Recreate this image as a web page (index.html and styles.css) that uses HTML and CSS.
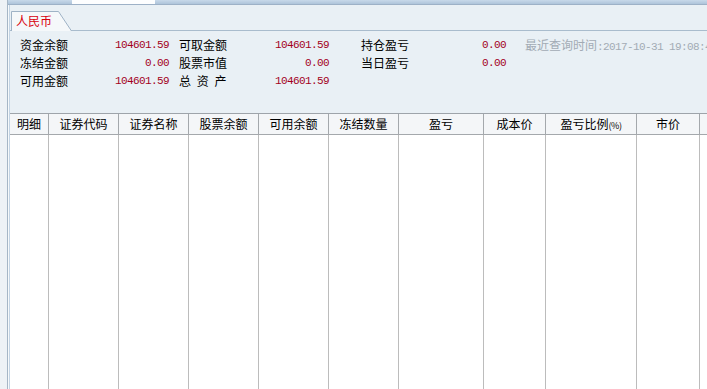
FILE: index.html
```html
<!DOCTYPE html>
<html lang="zh-CN">
<head>
    <meta charset="UTF-8">
    <title>资金股份</title>
    <link rel="stylesheet" href="styles.css">
</head>
<body>
    <div class="frame">
        <div class="panel">
            <div class="topbar">
                <div class="topbar-box"></div>
            </div>
            <div class="tabs">
                <div class="tab">
                    <svg class="tab-shape" width="61" height="20" viewBox="0 0 61 20">
                        <path d="M0.5 20 V0.5 H47.5 L60.5 20" fill="#f5f8fa" stroke="#9fb3c6" stroke-width="1"/>
                    </svg>
                    <span class="tab-label">人民币</span>
                </div>
            </div>
            <div class="info">
                <div class="pair w1"><span>资金余额</span><span class="num">104601.59</span></div>
                <div class="pair w2"><span>可取金额</span><span class="num">104601.59</span></div>
                <div class="pair w3"><span>持仓盈亏</span><span class="num">0.00</span></div>
                <div class="stamp">最近查询时间<span class="mono">:2017-10-31 19:08:44</span></div>

                <div class="pair w1"><span>冻结金额</span><span class="num">0.00</span></div>
                <div class="pair w2"><span>股票市值</span><span class="num">0.00</span></div>
                <div class="pair w3"><span>当日盈亏</span><span class="num">0.00</span></div>
                <div></div>

                <div class="pair w1"><span>可用金额</span><span class="num">104601.59</span></div>
                <div class="pair w2"><span class="spaced">总 资 产</span><span class="num">104601.59</span></div>
                <div></div>
                <div></div>
            </div>
            <div class="grid">
                <div class="th">明细</div>
                <div class="th">证券代码</div>
                <div class="th">证券名称</div>
                <div class="th">股票余额</div>
                <div class="th">可用余额</div>
                <div class="th">冻结数量</div>
                <div class="th">盈亏</div>
                <div class="th">成本价</div>
                <div class="th">盈亏比例<span class="pct">(%)</span></div>
                <div class="th">市价</div>
                <div class="th last"></div>

                <div class="td"></div>
                <div class="td"></div>
                <div class="td"></div>
                <div class="td"></div>
                <div class="td"></div>
                <div class="td"></div>
                <div class="td"></div>
                <div class="td"></div>
                <div class="td"></div>
                <div class="td"></div>
                <div class="td last"></div>
            </div>
        </div>
    </div>
</body>
</html>
```

FILE: styles.css
```css
html, body {
    margin: 0;
    padding: 0;
    height: 100%;
    overflow: hidden;
}
body {
    font-family: "Noto Sans CJK SC", "Liberation Sans", sans-serif;
    font-size: 12px;
    color: #000;
    background-color: #eef2f6;
}
.frame {
    height: 100%;
    padding-left: 7px;
    box-sizing: border-box;
}
.panel {
    height: 100%;
    display: flex;
    flex-direction: column;
    border-left: 1px solid #a6b6c6;
    box-shadow: inset 1px 0 0 #f6f9fb, inset 2px 0 0 #c4d4e4;
    padding-left: 2px;
    background-color: #e9f0f5;
    overflow: hidden;
}
.topbar {
    height: 4px;
    flex: none;
    background: linear-gradient(#c8d9ea, #aec4da);
    border-bottom: 1px solid #9db1c7;
    margin-left: -2px;
    padding-left: 64px;
}
.topbar-box {
    width: 83px;
    height: 4px;
    background-color: #fdfeff;
}
.tabs {
    height: 25px;
    flex: none;
    display: flex;
    align-items: flex-end;
    border-bottom: 1px solid #a9bccd;
    padding-left: 1px;
}
.tab {
    position: relative;
    width: 61px;
    height: 20px;
    margin-bottom: -1px;
}
.tab-shape {
    position: absolute;
    left: 0;
    top: 0;
}
.tab-label {
    position: relative;
    display: block;
    padding-left: 5px;
    line-height: 19px;
    color: #d8000c;
}
.info {
    height: 82px;
    flex: none;
    box-sizing: border-box;
    padding: 5px 0 0 10px;
    display: grid;
    grid-template-columns: 159px 182px 164px 1fr;
    grid-auto-rows: 18px;
    line-height: 18px;
    white-space: nowrap;
}
.pair {
    display: flex;
    justify-content: space-between;
}
.w1 { width: 149px; }
.w2 { width: 150px; }
.w3 { width: 145px; }
.num, .mono {
    font-family: "Liberation Mono", monospace;
    font-size: 11px;
    letter-spacing: -0.6px;
}
.num {
    color: #a3001c;
}
.spaced {
    word-spacing: 3px;
}
.stamp {
    color: #a2abb4;
    overflow: hidden;
}
.grid {
    flex: 1;
    display: grid;
    grid-template-columns: 39px 70px 70px 70px 70px 70px 85px 62px 91px 63px 1fr;
    grid-template-rows: 21px 1fr;
    background-color: #fff;
    border-top: 1px solid #9ea4aa;
}
.th {
    box-sizing: border-box;
    border-right: 1px solid #a4a8ac;
    border-bottom: 1px solid #a4a8ac;
    background-color: #f4f6f8;
    text-align: center;
    line-height: 19px;
    white-space: nowrap;
}
.pct {
    font-size: 9px;
    letter-spacing: -0.5px;
}
.td {
    border-right: 1px solid #bcbcbc;
}
.last {
    border-right: 0;
}
```
